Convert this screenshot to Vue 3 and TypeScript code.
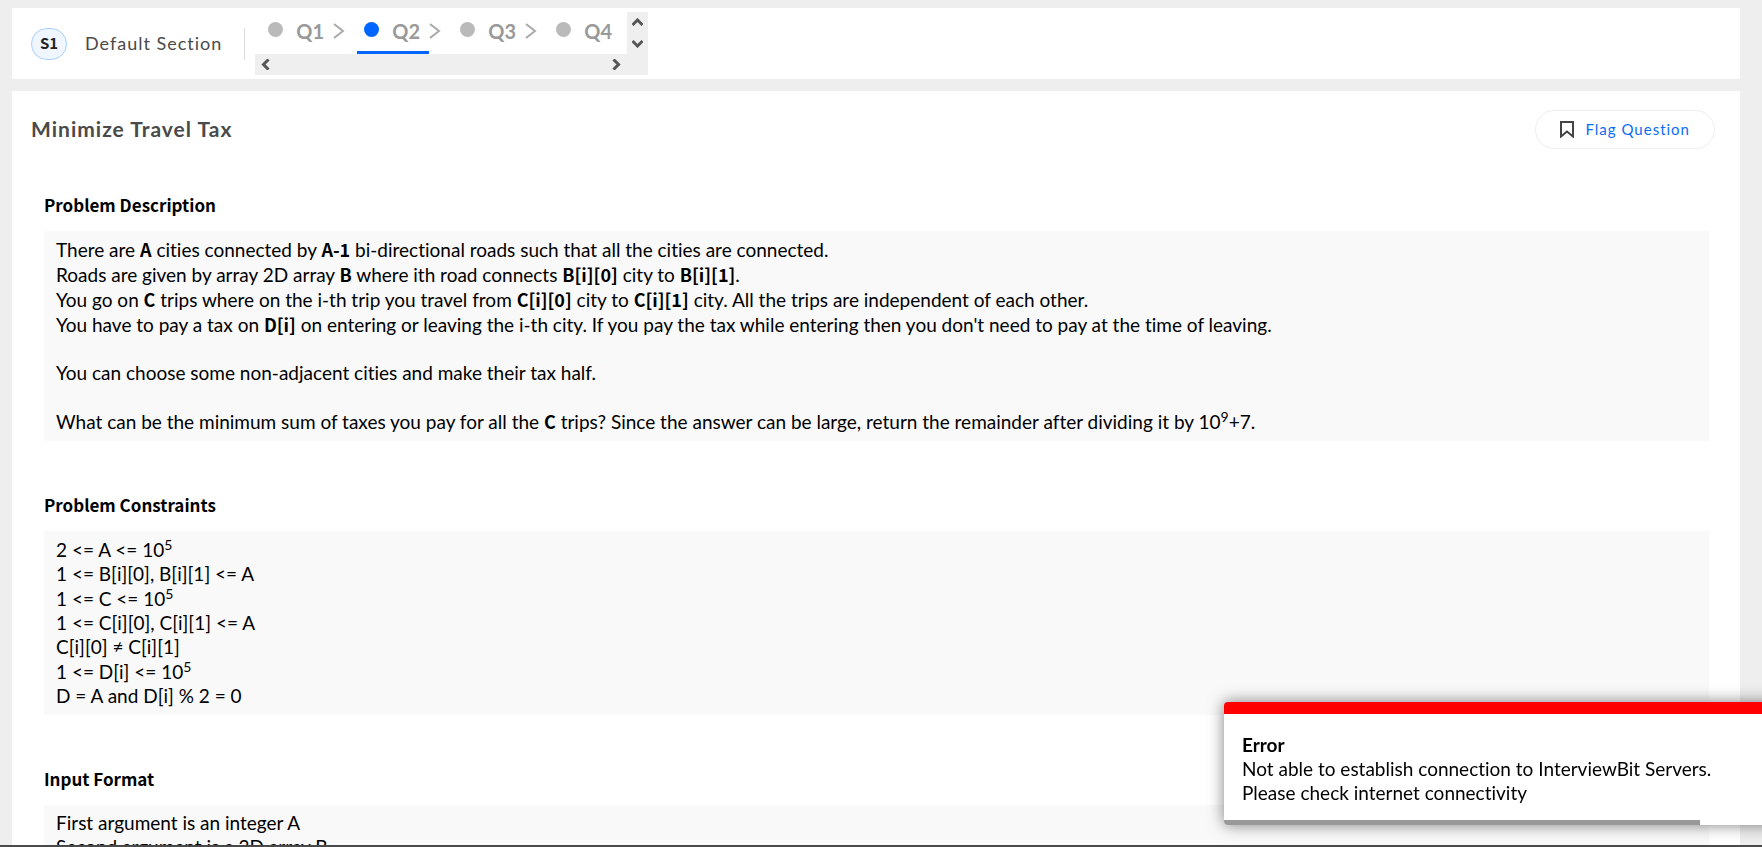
<script setup lang="ts">
import { ref } from 'vue'

interface Part {
  text: string
  kind?: 'bold' | 'sup'
}
type Line = Part[]
interface Section {
  title: string
  lines: Line[]
}

const questions = ['Q1', 'Q2', 'Q3', 'Q4']
const current = ref('Q2')
const progress = ref(85)

const t = (text: string): Part => ({ text })
const b = (text: string): Part => ({ text, kind: 'bold' })
const sup = (text: string): Part => ({ text, kind: 'sup' })

const sections: Section[] = [
  {
    title: 'Problem Description',
    lines: [
      [t('There are '), b('A'), t(' cities connected by '), b('A-1'), t(' bi-directional roads such that all the cities are connected.')],
      [t('Roads are given by array 2D array '), b('B'), t(' where ith road connects '), b('B[i][0]'), t(' city to '), b('B[i][1]'), t('.')],
      [t('You go on '), b('C'), t(' trips where on the i-th trip you travel from '), b('C[i][0]'), t(' city to '), b('C[i][1]'), t(' city. All the trips are independent of each other.')],
      [t('You have to pay a tax on '), b('D[i]'), t(" on entering or leaving the i-th city. If you pay the tax while entering then you don't need to pay at the time of leaving.")],
      [],
      [t('You can choose some non-adjacent cities and make their tax half.')],
      [],
      [t('What can be the minimum sum of taxes you pay for all the '), b('C'), t(' trips? Since the answer can be large, return the remainder after dividing it by 10'), sup('9'), t('+7.')],
    ],
  },
  {
    title: 'Problem Constraints',
    lines: [
      [t('2 <= A <= 10'), sup('5')],
      [t('1 <= B[i][0], B[i][1] <= A')],
      [t('1 <= C <= 10'), sup('5')],
      [t('1 <= C[i][0], C[i][1] <= A')],
      [t('C[i][0] ≠ C[i][1]')],
      [t('1 <= D[i] <= 10'), sup('5')],
      [t('D = A and D[i] % 2 = 0')],
    ],
  },
  {
    title: 'Input Format',
    lines: [[t('First argument is an integer A')], [t('Second argument is a 2D array B')]],
  },
]
</script>

<template>
  <div class="page">
    <header class="card topbar">
      <span class="badge">S1</span>
      <span class="section-name">Default Section</span>
      <span class="divider"></span>
      <nav class="stepper" aria-label="Questions">
        <div class="steps">
          <template v-for="(q, i) in questions" :key="q">
            <button type="button" class="step" :class="{ active: q === current }" @click="current = q">
              <span class="dot"></span>
              <span class="label">{{ q }}</span>
            </button>
            <svg v-if="i < questions.length - 1" class="sep" viewBox="0 0 12 16" aria-hidden="true">
              <path d="M1 1 L10 8 L1 15" />
            </svg>
          </template>
        </div>
        <div class="bar vertical">
          <button type="button" aria-label="Scroll up">
            <svg class="flat" viewBox="0 0 11 9"><path d="M0.5 7 L5.5 2 L10.5 7" /></svg>
          </button>
          <button type="button" aria-label="Scroll down">
            <svg class="flat" viewBox="0 0 11 9"><path d="M0.5 2 L5.5 7 L10.5 2" /></svg>
          </button>
        </div>
        <div class="bar horizontal">
          <button type="button" aria-label="Scroll left">
            <svg class="tall" viewBox="0 0 9 11"><path d="M7.5 0.5 L2.5 5.5 L7.5 10.5" /></svg>
          </button>
          <button type="button" aria-label="Scroll right">
            <svg class="tall" viewBox="0 0 9 11"><path d="M1.5 0.5 L6.5 5.5 L1.5 10.5" /></svg>
          </button>
        </div>
        <div class="bar"></div>
      </nav>
    </header>

    <main class="card problem">
      <div class="problem-head">
        <h1>Minimize Travel Tax</h1>
        <button type="button" class="flag">
          <svg viewBox="0 0 14 17" aria-hidden="true"><path d="M1 1 H13 V15.5 L7 10.5 L1 15.5 Z" /></svg>
          <span>Flag Question</span>
        </button>
      </div>
      <div class="sections">
        <section v-for="s in sections" :key="s.title">
          <h2>{{ s.title }}</h2>
          <div class="block">
            <p v-for="(line, i) in s.lines" :key="i" :class="{ rich: line.length > 1 }">
              <template v-for="(part, j) in line" :key="j">
                <b v-if="part.kind === 'bold'">{{ part.text }}</b>
                <sup v-else-if="part.kind === 'sup'">{{ part.text }}</sup>
                <template v-else>{{ part.text }}</template>
              </template>
            </p>
          </div>
        </section>
      </div>
    </main>

    <div class="bottom-edge"></div>

    <aside class="toast" role="alert">
      <div class="toast-body">
        <div>
          <strong>Error</strong>
          <p>Not able to establish connection to InterviewBit Servers.</p>
          <p>Please check internet connectivity</p>
        </div>
        <button type="button" class="close" aria-label="Close">×</button>
      </div>
      <div class="progress" :style="{ width: progress + '%' }"></div>
    </aside>
  </div>
</template>

<style>
body {
  margin: 0;
  background: #eeeeee;
}
</style>

<style scoped>
.page {
  display: flex;
  flex-direction: column;
  gap: 12px;
  box-sizing: border-box;
  height: 100vh;
  padding: 8px 22px 0 12px;
  overflow: hidden;
  background: #eeeeee;
  color: #000;
  font-family: Lato, "Open Sans", sans-serif;
  font-size: 19px;
  line-height: 24px;
  font-variant-ligatures: none;
}
button {
  margin: 0;
  padding: 0;
  border: 0;
  background: none;
  font: inherit;
  cursor: pointer;
}
svg {
  display: block;
  fill: none;
}
.card {
  background: #fff;
}
.topbar {
  display: flex;
  flex: none;
  align-items: center;
  padding: 4px 19px;
}
.badge {
  box-sizing: border-box;
  width: 36px;
  height: 32px;
  border: 1px solid #a9cfff;
  border-radius: 16px;
  background: #f0f6ff;
  color: #222;
  font-family: "Noto Sans CJK SC", "Noto Sans", sans-serif;
  font-size: 15px;
  font-weight: 700;
  line-height: 28px;
  text-align: center;
}
.section-name,
h1,
.flag span {
  padding-bottom: 2px;
  letter-spacing: 1px;
}
.section-name {
  margin-left: 18px;
  color: #4a4a4a;
  font-size: 18px;
}
.divider {
  width: 1px;
  height: 32px;
  margin: 0 10px 0 22px;
  background: #ddd;
}
.stepper {
  display: grid;
  grid-template-columns: 372px 21px;
  grid-template-rows: 42px 21px;
}
.steps {
  display: flex;
  padding-left: 6px;
}
.step {
  display: flex;
  flex: none;
  box-sizing: border-box;
  width: 72px;
  padding: 6px 0 0 7px;
  border-bottom: 3px solid transparent;
}
.step.active {
  border-color: #0066ff;
}
.dot {
  width: 15px;
  height: 15px;
  margin: 4px 13px 0 0;
  border-radius: 50%;
  background: #bababa;
}
.active .dot {
  background: #0066ff;
}
.label {
  color: #999;
  font-size: 20px;
  font-weight: 700;
  line-height: 26px;
}
.sep {
  flex: none;
  width: 12px;
  height: 16px;
  margin: 11px 12px 0 0;
  stroke: #aaa;
  stroke-width: 2;
}
.bar {
  display: flex;
  justify-content: space-between;
  background: #efefef;
  stroke: #555;
  stroke-width: 3;
}
.bar button {
  display: flex;
  align-items: center;
  justify-content: center;
  width: 21px;
  height: 21px;
}
.vertical {
  flex-direction: column;
}
.flat {
  width: 11px;
  height: 9px;
}
.tall {
  width: 9px;
  height: 11px;
}
.problem {
  flex: 1;
  min-height: 0;
  overflow: hidden;
}
.problem-head {
  display: flex;
  align-items: center;
  justify-content: space-between;
  padding: 19px 25px 0 19px;
}
h1 {
  margin: 0;
  color: #4a4a4a;
  font-size: 21px;
  font-weight: 700;
}
.flag {
  display: flex;
  gap: 11px;
  align-items: center;
  box-sizing: border-box;
  height: 39px;
  padding: 0 24px;
  border: 1px solid #eee;
  border-radius: 20px;
  color: #0b6cf5;
  font-size: 15px;
}
.flag svg {
  width: 14px;
  height: 17px;
  stroke: #444;
  stroke-width: 2;
}
.sections {
  display: flex;
  flex-direction: column;
  gap: 52px;
  padding: 44px 31px 0 32px;
}
h2 {
  margin: 0 0 14px;
  font-family: "Noto Sans CJK SC", "Noto Sans", sans-serif;
  font-size: 17px;
  font-weight: 700;
  line-height: 24px;
}
.block {
  padding: 6px 12px 7px;
  background: #f9f9f9;
}
p {
  min-height: 24px;
  margin: 0;
}
p.rich {
  line-height: 25px;
}
b {
  font-family: "Noto Sans CJK SC", "Noto Sans", sans-serif;
  font-size: 18px;
  line-height: 0;
}
sup {
  font-size: 14px;
  line-height: 0;
}
.bottom-edge {
  flex: none;
  height: 2px;
  margin: -12px -22px 0 -12px;
  background: #4a4a4a;
}
.toast {
  position: fixed;
  right: -22px;
  bottom: 22px;
  width: 560px;
  overflow: hidden;
  border-top: 12px solid #f00;
  border-radius: 4px;
  background: #fff;
  box-shadow: 0 0 16px rgba(0, 0, 0, 0.5);
}
.toast-body {
  display: flex;
  justify-content: space-between;
  padding: 18px 12px 15px 18px;
}
.toast-body strong {
  display: block;
  line-height: 25px;
}
.toast-body p {
  line-height: 24px;
}
.close {
  align-self: flex-start;
  color: #999;
  line-height: 16px;
}
.progress {
  height: 5px;
  background: #999;
}
</style>
